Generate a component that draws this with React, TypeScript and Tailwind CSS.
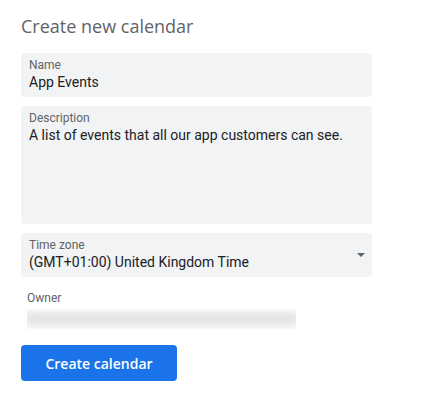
import { ChevronDown } from 'lucide-react';

function Field({
  label,
  value,
  tall,
  select,
}: {
  label: string;
  value: string;
  tall?: boolean;
  select?: boolean;
}) {
  return (
    <div
      className={`relative rounded-[4px] bg-[#f1f3f4] pl-2 pr-3 pt-[5px] ${tall ? 'h-[118px]' : 'h-[44px]'}`}
    >
      <div className="text-[12px] leading-[15px] text-[#5f6368]">{label}</div>
      <div className="text-[14px] leading-[19px] text-[#202124]">{value}</div>
      {select && (
        <span className="absolute right-[7px] top-[20px] h-0 w-0 border-x-[4px] border-t-[4px] border-x-transparent border-t-[#5f6368]" />
      )}
    </div>
  );
}

export default function App() {
  return (
    <div className="h-[396px] w-[448px] bg-white font-['Roboto',sans-serif]">
      <div className="w-[372px] pl-[21px] pt-[14px]">
        <h1 className="font-['Open_Sans',sans-serif] text-[18px] leading-[24px] text-[#5f6368]">
          Create new calendar
        </h1>
        <div className="mt-[15px] flex flex-col gap-[9px]">
          <Field label="Name" value="App Events" />
          <Field
            label="Description"
            value="A list of events that all our app customers can see."
            tall
          />
          <Field label="Time zone" value="(GMT+01:00) United Kingdom Time" select />
        </div>
        <div className="mt-[14px] pl-[6px]">
          <div className="text-[12px] leading-[15px] text-[#5f6368]">Owner</div>
          <div className="mt-[3px] h-[20px] w-[269px] overflow-hidden">
            <div className="mx-[-4px] mt-[3px] h-[14px] rounded-full bg-[#e2e2e2] blur-[4px]" />
          </div>
        </div>
        <button className="mt-[16px] h-[36px] w-[156px] rounded-[4px] bg-[#1a73e8] font-['Open_Sans',sans-serif] text-[14px] font-semibold text-white">
          Create calendar
        </button>
      </div>
    </div>
  );
}
